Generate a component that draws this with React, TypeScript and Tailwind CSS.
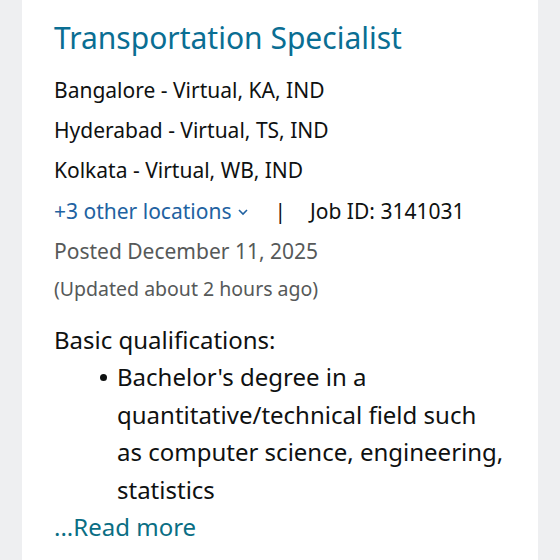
import React from 'react';

const locations = [
  'Bangalore - Virtual, KA, IND',
  'Hyderabad - Virtual, TS, IND',
  'Kolkata - Virtual, WB, IND',
];

const App: React.FC = () => {
  return (
    <div className="min-h-screen bg-[#eeeff1] px-[22px] font-['Noto_Sans',sans-serif] text-[#0f1111]">
      <div className="bg-white h-[560px] px-8 pt-[18px] overflow-hidden">
        {/* Title */}
        <h2 className="text-[30px] leading-[40px] text-[#0a6e93]">Transportation Specialist</h2>

        {/* Locations */}
        <div className="mt-[12px] text-[21px]">
          {locations.map((loc) => (
            <div key={loc} className="leading-[40.2px]">{loc}</div>
          ))}
          <div className="flex items-center leading-[40.2px]">
            <span className="text-[#2162a1] flex items-center">
              +3 other locations
              <svg width="14" height="14" viewBox="0 0 14 14" className="ml-[5px] mt-[2px]" fill="none" stroke="currentColor" strokeWidth="1.6">
                <path d="M3 5l4 4 4-4" />
              </svg>
            </span>
            <span className="ml-[24px]">|</span>
            <span className="ml-[24px]">Job ID: 3141031</span>
          </div>
        </div>

        {/* Dates */}
        <div className="text-[21px] leading-[40px] text-[#565959]">Posted December 11, 2025</div>
        <div className="text-[19.5px] leading-[36px] text-[#565959]">(Updated about 2 hours ago)</div>

        {/* Qualifications */}
        <div className="mt-[14px] text-[24px] leading-[37.5px]">
          <div>Basic qualifications:</div>
          <ul className="pl-[46px]">
            <li className="flex">
              <span className="w-[17px] shrink-0 flex items-start pt-[16px]">
                <span className="w-[7px] h-[7px] rounded-full bg-[#0f1111]" />
              </span>
              <span>
                Bachelor's degree in a quantitative/technical field such as computer science, engineering, statistics
              </span>
            </li>
          </ul>
          <div className="text-[#0a6e84]">...Read more</div>
        </div>
      </div>
    </div>
  );
};

export default App;
